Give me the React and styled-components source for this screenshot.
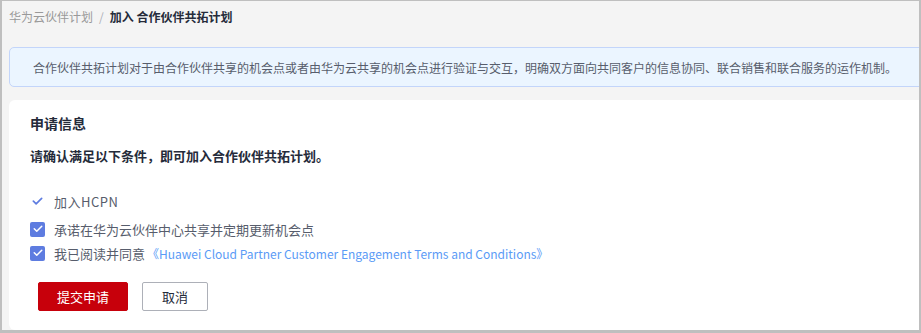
import React from "react"
import styled, { createGlobalStyle } from "styled-components"

const GlobalStyle = createGlobalStyle`
  html, body {
    margin: 0;
    padding: 0;
  }
  body {
    font-family: "Noto Sans CJK SC", "Noto Sans", sans-serif;
    color: #575d6c;
  }
  * {
    box-sizing: border-box;
  }
`

const Frame = styled.div`
  width: 921px;
  height: 333px;
  border: 2px solid #bfbfbf;
  border-top-width: 1px;
  border-bottom-width: 3px;
  background: #f4f4f4;
  padding-left: 7px;
  display: flex;
  flex-direction: column;
  overflow: hidden;
`

const Breadcrumb = styled.nav`
  display: flex;
  align-items: center;
  height: 30px;
  font-size: 12px;
  color: #999;
  gap: 6px;

  .sep {
    color: #adb0b8;
  }
  .current {
    color: #252b3a;
    font-weight: 700;
  }
`

const Notice = styled.div`
  margin-top: 16px;
  margin-right: -8px;
  height: 40px;
  display: flex;
  align-items: center;
  padding-left: 23px;
  background: #ebf5ff;
  border: 1px solid #c3d5fa;
  border-radius: 5px;
  font-size: 12px;
  color: #575d6c;
  white-space: nowrap;
`

const Card = styled.section`
  flex: 1;
  margin-top: 13px;
  margin-right: -8px;
  background: #fff;
  border-radius: 6px;
  padding: 12px 21px 0;
`

const Title = styled.h2`
  margin: 0;
  font-size: 14px;
  line-height: 22px;
  font-weight: 700;
  color: #252b3a;
`

const Lead = styled.p`
  margin: 11px 0 0;
  font-size: 13px;
  line-height: 22px;
  font-weight: 700;
  color: #252b3a;
`

const Conditions = styled.ul`
  list-style: none;
  margin: 23px 0 0;
  padding: 0;
`

const Condition = styled.li`
  display: flex;
  align-items: center;
  gap: ${(p) => (p.$done ? "11px" : "9px")};
  height: ${(p) => (p.$done ? "22px" : "24px")};
  margin-bottom: ${(p) => (p.$done ? "5px" : "0")};
  font-size: 13px;
  color: #575d6c;
  padding-left: ${(p) => (p.$done ? "2px" : "0")};
  letter-spacing: ${(p) => (p.$done ? "0.5px" : "0")};
`

const Box = styled.span`
  width: 15px;
  height: 15px;
  border-radius: 2px;
  background: #5e7ce0;
  display: inline-flex;
  align-items: center;
  justify-content: center;
  flex-shrink: 0;
`

const Link = styled.a`
  color: #5b9bf6;
  text-decoration: none;
  margin-left: 2px;
  font-size: 12px;
`

const Actions = styled.div`
  display: flex;
  gap: 14px;
  margin-top: 17px;
  padding-left: 8px;
`

const Button = styled.button`
  height: 29px;
  padding: 0;
  width: ${(p) => (p.$primary ? "90px" : "66px")};
  border-radius: 2px;
  font-family: inherit;
  font-size: 13px;
  cursor: pointer;
  border: 1px solid ${(p) => (p.$primary ? "#c7000b" : "#adb0b8")};
  background: ${(p) => (p.$primary ? "#c7000b" : "#fff")};
  color: ${(p) => (p.$primary ? "#fff" : "#252b3a")};
`

const Tick = ({ color = "#fff", size = 10 }) => (
  <svg width={size} height={size * 0.75} viewBox="0 0 12 9" fill="none">
    <path d="M1.5 4.5l3 3 6-6" stroke={color} strokeWidth="1.8" strokeLinecap="round" strokeLinejoin="round" />
  </svg>
)

export default function App() {
  return (
    <>
      <GlobalStyle />
      <Frame>
        <Breadcrumb>
          <span>华为云伙伴计划</span>
          <span className="sep">/</span>
          <span className="current">加入 合作伙伴共拓计划</span>
        </Breadcrumb>
        <Notice>
          合作伙伴共拓计划对于由合作伙伴共享的机会点或者由华为云共享的机会点进行验证与交互，明确双方面向共同客户的信息协同、联合销售和联合服务的运作机制。
        </Notice>
        <Card>
          <Title>申请信息</Title>
          <Lead>请确认满足以下条件，即可加入合作伙伴共拓计划。</Lead>
          <Conditions>
            <Condition $done>
              <Tick color="#5e7ce0" size={11} />
              加入HCPN
            </Condition>
            <Condition>
              <Box>
                <Tick />
              </Box>
              承诺在华为云伙伴中心共享并定期更新机会点
            </Condition>
            <Condition>
              <Box>
                <Tick />
              </Box>
              <span>
                我已阅读并同意
                <Link href="#">《Huawei Cloud Partner Customer Engagement Terms and Conditions》</Link>
              </span>
            </Condition>
          </Conditions>
          <Actions>
            <Button $primary>提交申请</Button>
            <Button>取消</Button>
          </Actions>
        </Card>
      </Frame>
    </>
  )
}
